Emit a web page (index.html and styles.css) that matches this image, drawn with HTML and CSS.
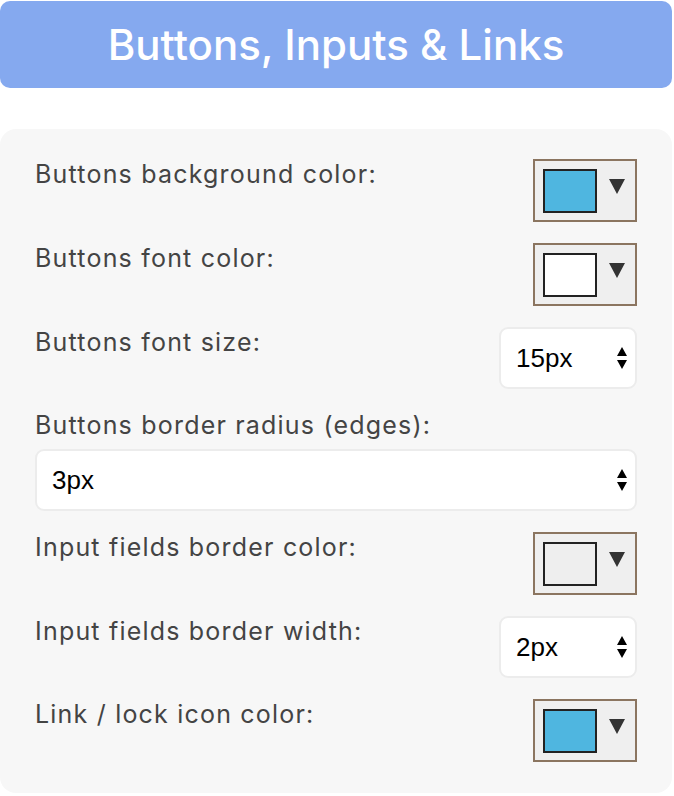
FILE: index.html
```html
<!DOCTYPE html>
<html lang="en">
<head>
<meta charset="utf-8">
<title>Buttons, Inputs &amp; Links</title>
<link rel="stylesheet" href="styles.css">
</head>
<body>
<div class="page">
  <header class="header"><h1 class="title">Buttons, Inputs &amp; Links</h1></header>
  <section class="panel">
    <div class="row">
      <span class="label">Buttons background color:</span>
      <div class="picker"><span class="swatch swatch-blue"></span><svg class="caret" width="16" height="15" viewBox="0 0 16 15"><path d="M0 0H16L8 15Z"/></svg></div>
    </div>
    <div class="row">
      <span class="label">Buttons font color:</span>
      <div class="picker"><span class="swatch swatch-white"></span><svg class="caret" width="16" height="15" viewBox="0 0 16 15"><path d="M0 0H16L8 15Z"/></svg></div>
    </div>
    <div class="row">
      <span class="label">Buttons font size:</span>
      <div class="select select-small"><span class="value">15px</span><svg class="spin" width="10" height="23" viewBox="0 0 10 23"><path d="M5 0L10 9H0Z M0 13H10L5 22Z"/></svg></div>
    </div>
    <div class="row row-stack">
      <span class="label">Buttons border radius (edges):</span>
      <div class="select select-wide"><span class="value">3px</span><svg class="spin" width="10" height="23" viewBox="0 0 10 23"><path d="M5 0L10 9H0Z M0 13H10L5 22Z"/></svg></div>
    </div>
    <div class="row">
      <span class="label">Input fields border color:</span>
      <div class="picker"><span class="swatch swatch-grey"></span><svg class="caret" width="16" height="15" viewBox="0 0 16 15"><path d="M0 0H16L8 15Z"/></svg></div>
    </div>
    <div class="row">
      <span class="label">Input fields border width:</span>
      <div class="select select-small"><span class="value">2px</span><svg class="spin" width="10" height="23" viewBox="0 0 10 23"><path d="M5 0L10 9H0Z M0 13H10L5 22Z"/></svg></div>
    </div>
    <div class="row">
      <span class="label">Link / lock icon color:</span>
      <div class="picker"><span class="swatch swatch-blue"></span><svg class="caret" width="16" height="15" viewBox="0 0 16 15"><path d="M0 0H16L8 15Z"/></svg></div>
    </div>
  </section>
</div>
</body>
</html>
```
FILE: styles.css
```css
* { box-sizing: border-box; }
html, body { margin: 0; padding: 0; background: #ffffff; }
body { font-family: Inter, "Open Sans", sans-serif; }
.page { width: 672px; padding-top: 1px; }
.header {
  height: 87px;
  background: #85a9ef;
  border-radius: 10px;
  display: flex;
  align-items: center;
  justify-content: center;
  margin-bottom: 41px;
}
.title {
  margin: 0;
  color: #ffffff;
  font-size: 42px;
  line-height: 50px;
  font-weight: 500;
  letter-spacing: 0;
}
.panel {
  background: #f7f7f7;
  border-radius: 16px;
  padding: 30px 35px 31px;
  display: flex;
  flex-direction: column;
  gap: 21px;
}
.row {
  display: flex;
  justify-content: space-between;
  align-items: flex-start;
}
.row-stack {
  flex-direction: column;
  align-items: stretch;
  gap: 9px;
}
.label {
  font-size: 25px;
  line-height: 30px;
  letter-spacing: 1.2px;
  color: #444444;
}
.picker {
  width: 104px;
  height: 63px;
  border: 2px solid #8b7560;
  background: #efefef;
  display: flex;
  align-items: center;
  padding-left: 8px;
  gap: 12px;
}
.swatch {
  width: 54px;
  height: 44px;
  border: 2px solid #222222;
}
.swatch-blue { background: #4fb6e0; }
.swatch-white { background: #ffffff; }
.swatch-grey { background: #eeeeee; }
.caret { fill: #333333; margin-top: -8px; }
.select {
  height: 62px;
  background: #ffffff;
  border: 2px solid #ececec;
  border-radius: 9px;
  display: flex;
  align-items: center;
  justify-content: space-between;
  padding: 0 8px 0 15px;
  font-family: "Liberation Sans", Arial, sans-serif;
  font-size: 26px;
  color: #000000;
}
.select-small { width: 138px; }
.select-wide { width: 100%; }
.spin { fill: #000000; }
```
